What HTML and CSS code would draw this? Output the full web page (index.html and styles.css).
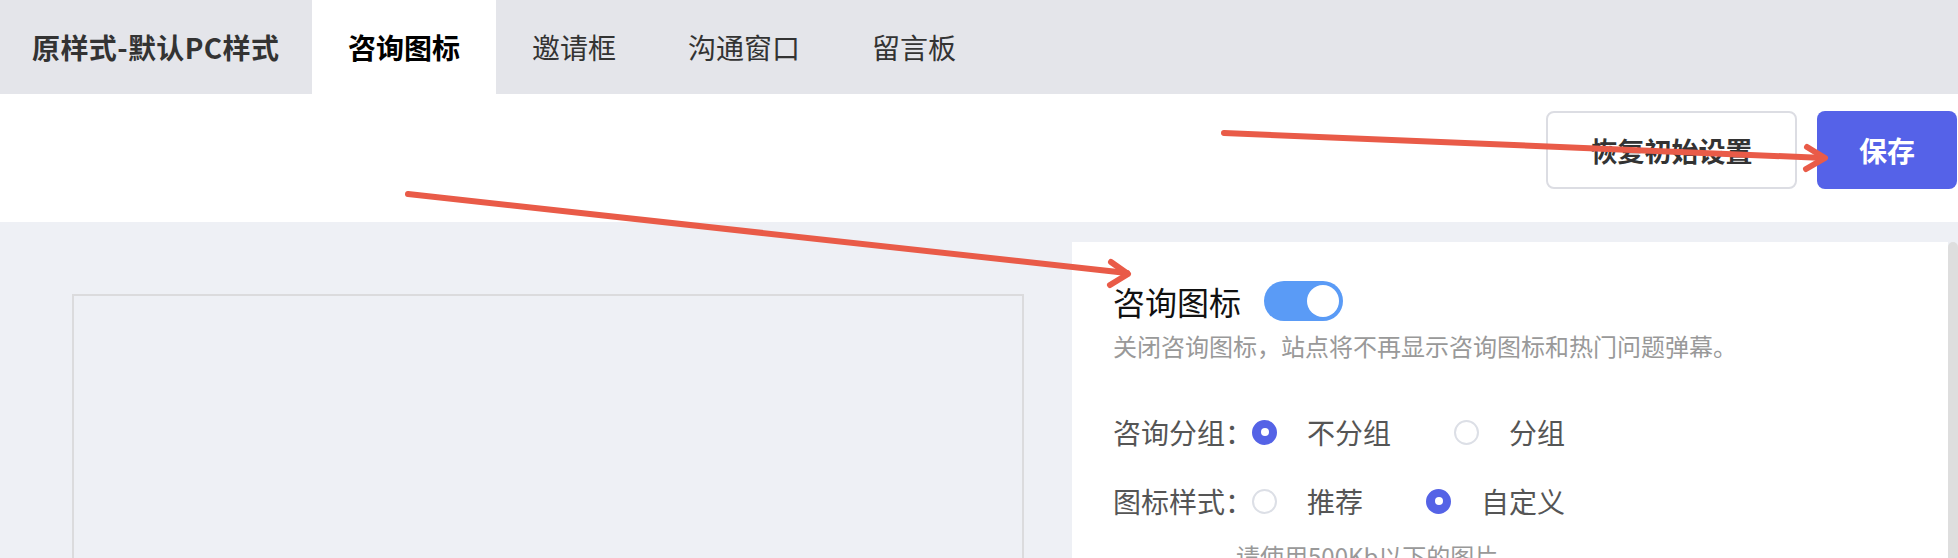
FILE: index.html
```html
<!DOCTYPE html>
<html lang="zh-CN">
<head>
<meta charset="utf-8">
<title>咨询图标设置</title>
<link rel="stylesheet" href="styles.css">
</head>
<body>
<div class="page">
  <nav class="tabs">
    <div class="tab tab-first">原样式-默认PC样式</div>
    <div class="tab tab-active">咨询图标</div>
    <div class="tab">邀请框</div>
    <div class="tab">沟通窗口</div>
    <div class="tab">留言板</div>
  </nav>
  <div class="toolbar">
    <button class="btn btn-reset">恢复初始设置</button>
    <button class="btn btn-save">保存</button>
  </div>
  <main class="content">
    <div class="preview"></div>
    <section class="panel">
      <div class="title-row">
        <span class="title">咨询图标</span>
        <span class="switch"><span class="knob"></span></span>
      </div>
      <p class="desc">关闭咨询图标，站点将不再显示咨询图标和热门问题弹幕。</p>
      <div class="form-row">
        <span class="label">咨询分组：</span>
        <span class="option"><span class="radio checked"></span><span class="opt-text">不分组</span></span>
        <span class="option"><span class="radio"></span><span class="opt-text">分组</span></span>
      </div>
      <div class="form-row">
        <span class="label">图标样式：</span>
        <span class="option"><span class="radio"></span><span class="opt-text">推荐</span></span>
        <span class="option"><span class="radio checked"></span><span class="opt-text">自定义</span></span>
      </div>
      <p class="hint">请使用500Kb以下的图片</p>
    </section>
    <div class="scrollbar"></div>
  </main>
  <svg class="annotations" width="1958" height="558" viewBox="0 0 1958 558">
    <g fill="none" stroke="#e95b48" stroke-width="6" stroke-linecap="round" stroke-linejoin="round">
      <line x1="408" y1="194" x2="1127" y2="273"/>
      <polyline points="1111,262 1128,274 1110,285"/>
      <line x1="1224" y1="133" x2="1824" y2="158"/>
      <polyline points="1807,147 1825,158 1806,169"/>
    </g>
  </svg>
</div>
</body>
</html>
```
FILE: styles.css
```css
* { box-sizing: border-box; }
html, body { margin: 0; padding: 0; }
body {
  width: 1958px;
  height: 558px;
  overflow: hidden;
  font-family: "Noto Sans CJK SC", "Noto Sans", sans-serif;
  background: #eef0f5;
}
.page { position: relative; width: 1958px; height: 558px; display: flex; flex-direction: column; }

.tabs {
  display: flex;
  height: 94px;
  background: #e4e5ea;
  flex-shrink: 0;
}
.tab {
  padding: 0 36px;
  line-height: 94px;
  font-size: 28px;
  color: #333;
  white-space: nowrap;
}
.tab-first {
  width: 312px;
  padding-left: 32px;
  padding-right: 0;
  font-weight: 700;
  letter-spacing: 0.4px;
}
.tab-active { background: #fff; color: #000; font-weight: 700; }

.toolbar {
  height: 128px;
  flex-shrink: 0;
  background: #fff;
  display: flex;
  justify-content: flex-end;
  align-items: flex-start;
  padding-top: 17px;
  padding-right: 1px;
  gap: 20px;
}
.btn {
  height: 78px;
  border-radius: 8px;
  font-family: inherit;
  font-size: 27px;
  font-weight: 700;
  cursor: pointer;
  padding: 0;
}
.btn-reset {
  width: 251px;
  background: #fff;
  border: 2px solid #dcdde3;
  color: #333;
}
.btn-save {
  width: 140px;
  background: #5562e8;
  border: none;
  color: #fff;
  font-size: 28px;
}

.content {
  flex: 1;
  display: flex;
  align-items: flex-start;
  padding-left: 72px;
  overflow: hidden;
  background: #eef0f5;
}
.preview {
  width: 952px;
  height: 400px;
  margin-top: 72px;
  border: 2px solid #dbdbdd;
  background: #eef0f5;
  flex-shrink: 0;
}
.panel {
  width: 876px;
  height: 400px;
  margin-top: 20px;
  margin-left: 48px;
  background: #fff;
  padding: 37px 41px 0;
  flex-shrink: 0;
}
.scrollbar {
  width: 10px;
  height: 400px;
  margin-top: 20px;
  background: #dedede;
  border-radius: 5px 5px 0 0;
}

.title-row {
  display: flex;
  align-items: center;
  height: 44px;
  gap: 23px;
}
.title { font-size: 32px; color: #111; line-height: 44px; }
.switch {
  position: relative;
  width: 79px;
  height: 40px;
  border-radius: 20px;
  background: #5a9bf6;
}
.knob {
  position: absolute;
  right: 4px;
  top: 4px;
  width: 32px;
  height: 32px;
  border-radius: 50%;
  background: #fff;
}
.desc {
  margin: 7px 0 0;
  font-size: 24px;
  line-height: 32px;
  color: #999;
}
.form-row {
  display: flex;
  align-items: center;
  height: 50px;
  font-size: 28px;
  color: #555;
}
.desc + .form-row { margin-top: 45px; }
.form-row + .form-row { margin-top: 19px; }
.label { width: 139px; flex-shrink: 0; white-space: nowrap; overflow: visible; }
.option { display: flex; align-items: center; margin-right: 63px; }
.radio {
  width: 25px;
  height: 25px;
  border-radius: 50%;
  border: 2px solid #dcdfe6;
  background: #fff;
  margin-right: 30px;
  position: relative;
  flex-shrink: 0;
}
.radio.checked { background: #5563e6; border-color: #5563e6; }
.radio.checked::after {
  content: "";
  position: absolute;
  left: 50%;
  top: 50%;
  width: 8px;
  height: 8px;
  margin: -4px 0 0 -4px;
  border-radius: 50%;
  background: #fff;
}
.hint {
  margin: 14px 0 0 123px;
  font-size: 24px;
  line-height: 32px;
  color: #999;
}

.annotations {
  position: absolute;
  left: 0;
  top: 0;
  pointer-events: none;
}
```
